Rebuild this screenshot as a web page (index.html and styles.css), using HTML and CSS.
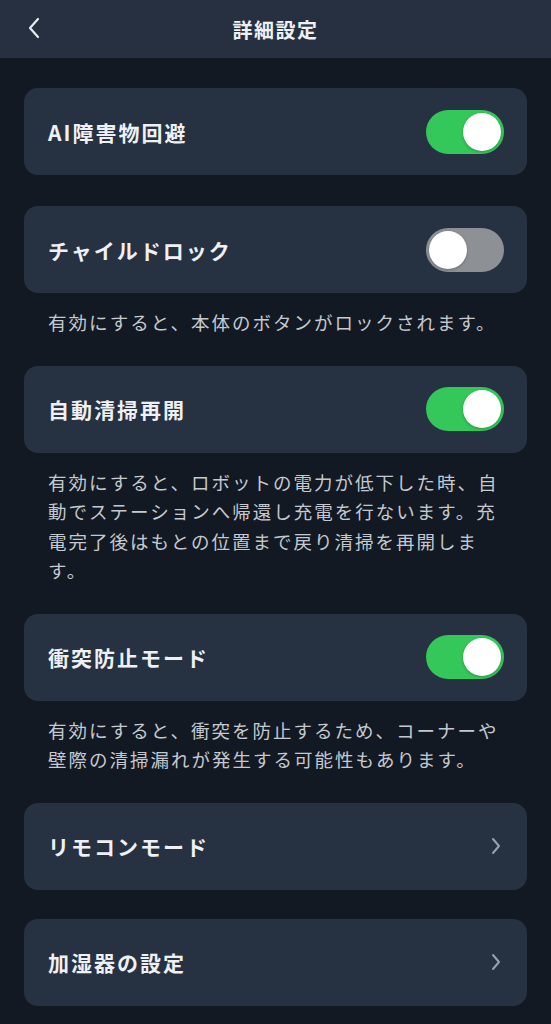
FILE: index.html
```html
<!DOCTYPE html>
<html lang="ja">
<head>
  <meta charset="UTF-8" />
  <meta name="viewport" content="width=device-width, initial-scale=1.0"/>
  <title>詳細設定</title>
  <link rel="stylesheet" href="styles.css">
</head>
<body>
  <!-- Header -->
  <div class="header">
    <button class="back" aria-label="戻る">
      <svg width="14" height="22" viewBox="0 0 14 22"><path d="M11 2 L3 11 L11 20" fill="none" stroke="#e6e9ee" stroke-width="2.2" stroke-linecap="round" stroke-linejoin="round"/></svg>
    </button>
    <div class="title">詳細設定</div>
  </div>

  <div class="list">
    <div class="card">
      <span class="label">AI障害物回避</span>
      <div class="toggle on"><div class="knob"></div></div>
    </div>

    <div class="card">
      <span class="label">チャイルドロック</span>
      <div class="toggle"><div class="knob"></div></div>
    </div>
    <p class="desc">有効にすると、本体のボタンがロックされます。</p>

    <div class="card">
      <span class="label">自動清掃再開</span>
      <div class="toggle on"><div class="knob"></div></div>
    </div>
    <p class="desc">有効にすると、ロボットの電力が低下した時、自動でステーションへ帰還し充電を行ないます。充電完了後はもとの位置まで戻り清掃を再開します。</p>

    <div class="card">
      <span class="label">衝突防止モード</span>
      <div class="toggle on"><div class="knob"></div></div>
    </div>
    <p class="desc">有効にすると、衝突を防止するため、コーナーや壁際の清掃漏れが発生する可能性もあります。</p>

    <div class="card">
      <span class="label">リモコンモード</span>
      <svg class="chev" width="12" height="20" viewBox="0 0 12 20"><path d="M3 3 L9 10 L3 17" fill="none" stroke="#9ba1aa" stroke-width="2" stroke-linecap="round" stroke-linejoin="round"/></svg>
    </div>

    <div class="card">
      <span class="label">加湿器の設定</span>
      <svg class="chev" width="12" height="20" viewBox="0 0 12 20"><path d="M3 3 L9 10 L3 17" fill="none" stroke="#9ba1aa" stroke-width="2" stroke-linecap="round" stroke-linejoin="round"/></svg>
    </div>
  </div>
</body>
</html>
```

FILE: styles.css
```css
body {
  margin: 0;
  font-family: "Noto Sans CJK JP", "Noto Sans", sans-serif;
  background: #121923;
  color: #eef0f3;
  min-height: 100vh;
}
.header {
  height: 58px;
  background: #263040;
  display: flex;
  align-items: center;
  justify-content: center;
  position: relative;
}
.back {
  position: absolute;
  left: 22px;
  top: 16px;
  background: none;
  border: none;
  padding: 0;
  width: 24px;
  height: 24px;
  display: flex;
  align-items: center;
  justify-content: center;
}
.title {
  font-size: 20px;
  font-weight: 700;
  letter-spacing: 1.5px;
  color: #eef0f3;
}
.list {
  padding: 30px 24px;
  display: flex;
  flex-direction: column;
}
.card {
  background: #263141;
  border-radius: 14px;
  height: 87px;
  padding: 0 23px 0 24px;
  display: flex;
  align-items: center;
  justify-content: space-between;
  box-sizing: border-box;
  margin-bottom: 31px;
}
.card + .desc {
  margin-top: -16px;
}
.desc + .card + .card {
  margin-top: -2px;
}
.label {
  font-size: 21px;
  font-weight: 700;
  letter-spacing: 2px;
}
.toggle {
  width: 78px;
  height: 44px;
  border-radius: 22px;
  background: #8d9095;
  position: relative;
  flex-shrink: 0;
}
.toggle.on {
  background: #34c759;
}
.knob {
  position: absolute;
  top: 3px;
  left: 3px;
  width: 38px;
  height: 38px;
  border-radius: 50%;
  background: #fff;
  box-shadow: 0 1px 3px rgba(0,0,0,0.25);
}
.toggle.on .knob {
  left: 37px;
}
.chev {
  margin-right: 2px;
}
.desc {
  margin: 0 0 28px;
  padding: 0 24px;
  font-size: 18.5px;
  line-height: 29.5px;
  letter-spacing: 2px;
  color: #c5c9cf;
}
```
